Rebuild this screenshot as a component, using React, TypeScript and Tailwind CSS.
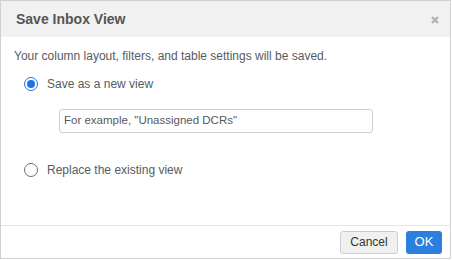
import React from "react";

export default function App() {
  return (
    <div
      className="w-[451px] h-[259px] border border-[#d0d0d0] bg-white flex flex-col"
      style={{ fontFamily: '"Liberation Sans", Arial, sans-serif' }}
    >
      <div className="h-[36px] bg-[#f1f1f1] flex items-center justify-between pl-[15px] pr-[11px] shrink-0">
        <span className="text-[14px] font-bold text-[#555]">Save Inbox View</span>
        <svg width="8" height="8" viewBox="0 0 8 8" className="mt-[2px]">
          <path d="M1 1 L7 7 M7 1 L1 7" stroke="#b0b0b0" strokeWidth="2.2" />
        </svg>
      </div>
      <div className="flex-1 pl-[13px] pt-[11px] text-[12px] text-[#555b61]">
        <div className="leading-[16px]">Your column layout, filters, and table settings will be saved.</div>
        <div className="flex items-center mt-[12px] pl-[10px] h-[16px]">
          <span className="w-[14px] h-[14px] rounded-full border-[1.5px] border-[#1f73e6] flex items-center justify-center">
            <span className="w-[8px] h-[8px] rounded-full bg-[#1f73e6]" />
          </span>
          <span className="ml-[9px]">Save as a new view</span>
        </div>
        <div className="mt-[17px] ml-[45px] w-[314px] h-[24px] border border-[#cfcfcf] rounded-[3px] flex items-center px-[4px]">
          <span className="text-[#55595e] text-[11.5px]">For example, "Unassigned DCRs"</span>
        </div>
        <div className="flex items-center mt-[29px] pl-[10px] h-[16px]">
          <span className="w-[14px] h-[14px] rounded-full border border-[#6e6e6e]" />
          <span className="ml-[9px]">Replace the existing view</span>
        </div>
      </div>
      <div className="h-[33px] border-t border-[#e4e4e4] flex items-center justify-end pr-[8px] gap-[8px] shrink-0">
        <button className="h-[23px] w-[58px] bg-[#f0f0f0] border border-[#cdcdcd] rounded-[3px] text-[12px] text-[#333]">
          Cancel
        </button>
        <button className="h-[23px] w-[36px] bg-[#2a7fdf] rounded-[3px] text-[13px] text-white">OK</button>
      </div>
    </div>
  );
}
